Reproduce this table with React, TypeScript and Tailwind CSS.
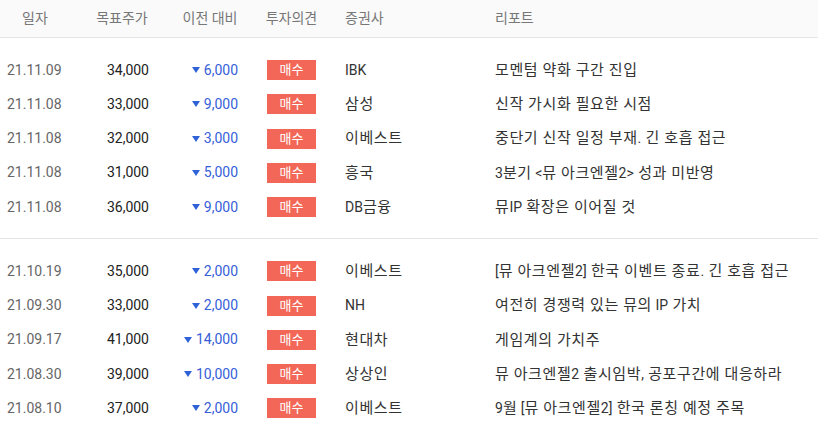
const groups = [
  [
    { date: '21.11.09', price: '34,000', diff: '6,000', broker: 'IBK', title: '모멘텀 약화 구간 진입' },
    { date: '21.11.08', price: '33,000', diff: '9,000', broker: '삼성', title: '신작 가시화 필요한 시점' },
    { date: '21.11.08', price: '32,000', diff: '3,000', broker: '이베스트', title: '중단기 신작 일정 부재. 긴 호흡 접근' },
    { date: '21.11.08', price: '31,000', diff: '5,000', broker: '흥국', title: '3분기 <뮤 아크엔젤2> 성과 미반영' },
    { date: '21.11.08', price: '36,000', diff: '9,000', broker: 'DB금융', title: '뮤IP 확장은 이어질 것' },
  ],
  [
    { date: '21.10.19', price: '35,000', diff: '2,000', broker: '이베스트', title: '[뮤 아크엔젤2] 한국 이벤트 종료. 긴 호흡 접근' },
    { date: '21.09.30', price: '33,000', diff: '2,000', broker: 'NH', title: '여전히 경쟁력 있는 뮤의 IP 가치' },
    { date: '21.09.17', price: '41,000', diff: '14,000', broker: '현대차', title: '게임계의 가치주' },
    { date: '21.08.30', price: '39,000', diff: '10,000', broker: '상상인', title: '뮤 아크엔젤2 출시임박, 공포구간에 대응하라' },
    { date: '21.08.10', price: '37,000', diff: '2,000', broker: '이베스트', title: '9월 [뮤 아크엔젤2] 한국 론칭 예정 주목' },
  ],
];

const cols = 'grid grid-cols-[70px_104px_72px_91px_150px_1fr]';

// Hangul runs are drawn a bit larger/wider than latin, like the original font
function Mixed({ text }: { text: string }) {
  const parts = text.split(/([가-힣 ]*[가-힣]+)/).filter(Boolean);
  return (
    <>
      {parts.map((p, i) =>
        /[가-힣]/.test(p) ? (
          <span key={i} className="text-[15px] tracking-[0.6px]">{p}</span>
        ) : (
          <span key={i}>{p}</span>
        )
      )}
    </>
  );
}

export default function App() {
  return (
    <div className="w-[818px] h-[429px] bg-white overflow-hidden font-['Roboto','Noto_Sans_CJK_KR',sans-serif] text-[14px]">
      {/* Header */}
      <div className={`${cols} h-[38px] items-center bg-[#fafafa] border-b border-[#e5e5e5] text-[#777]`}>
        <div className="text-center">일자</div>
        <div className="text-center">목표주가</div>
        <div className="text-center">이전 대비</div>
        <div className="text-center">투자의견</div>
        <div className="pl-[8px]">증권사</div>
        <div className="pl-[8px]">리포트</div>
      </div>

      {groups.map((rows, gi) => (
        <div key={gi} className={`pt-[15px] pb-[14px] ${gi === 0 ? 'border-b border-[#e5e5e5]' : ''}`}>
          {rows.map((r, i) => (
            <div key={i} className={`${cols} h-[34.25px] items-center`}>
              <div className="pl-[7px] text-[#666]">{r.date}</div>
              <div className="text-right pr-[25px] text-[#222]">{r.price}</div>
              <div className="flex items-center justify-end pr-[8px] text-[#3560d8]">
                <svg width="8" height="6" viewBox="0 0 8 6" className="mr-[4px]">
                  <path d="M0 0H8L4 6Z" fill="#2f62d6" />
                </svg>
                {r.diff}
              </div>
              <div className="flex justify-center">
                <span className="w-[49px] h-[20px] bg-[#f26757] text-white text-[13px] leading-[20px] text-center">매수</span>
              </div>
              <div className="pl-[8px] text-[#333] whitespace-nowrap"><Mixed text={r.broker} /></div>
              <div className="pl-[8px] text-[#333] whitespace-nowrap"><Mixed text={r.title} /></div>
            </div>
          ))}
        </div>
      ))}
    </div>
  );
}
